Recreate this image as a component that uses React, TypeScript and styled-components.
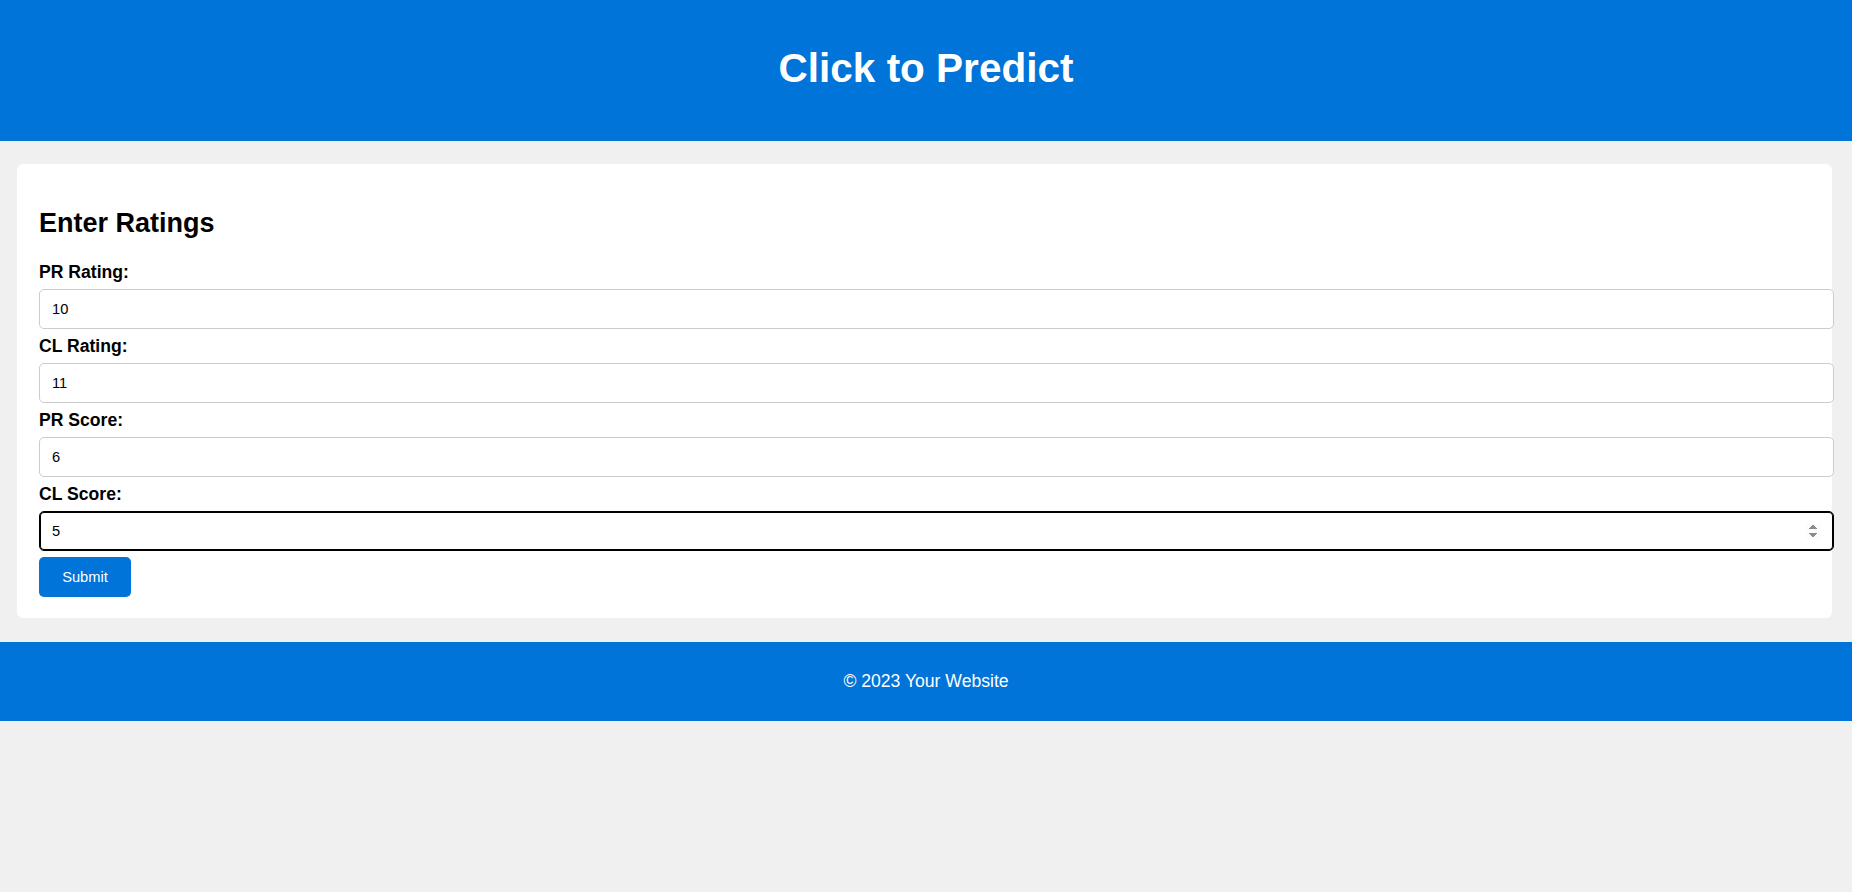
import { createGlobalStyle } from "styled-components";
import styled from "styled-components";

const GlobalStyle = createGlobalStyle`
    body {
        margin: 0;
        background-color: #f0f0f0;
        font-family: "Liberation Sans", Arial, sans-serif;
    }
`;

const Header = styled.header`
    height: 141px;
    background-color: #0074d9;
    color: #ffffff;
    display: flex;
    align-items: center;
    justify-content: center;
    padding-bottom: 4px;
    box-sizing: border-box;
`;

const Title = styled.h1`
    margin: 0;
    font-size: 40.5px;
    font-weight: bold;
`;

const Main = styled.main`
    padding: 23px 20px 24px 17px;
`;

const Card = styled.section`
    background-color: #ffffff;
    border-radius: 6px;
    padding: 22px 22px 21px;
`;

const Heading = styled.h2`
    margin: 22px 0 24px;
    font-size: 27px;
    line-height: 30px;
    font-weight: bold;
    color: #000000;
`;

const Form = styled.form`
    display: flex;
    flex-direction: column;
    align-items: flex-start;
`;

const Label = styled.label`
    display: block;
    font-size: 17.6px;
    line-height: 20px;
    font-weight: bold;
    color: #000000;
    margin: 7px 0;

    &:first-child {
        margin-top: 0;
    }
`;

const Input = styled.input<{ $active?: boolean }>`
    box-sizing: border-box;
    width: calc(100% + 24px);
    height: 40px;
    padding: 0 12px;
    border: 1px solid ${props => (props.$active ? "#000000" : "#cccccc")};
    box-shadow: ${props => (props.$active ? "inset 0 0 0 1px #000000" : "none")};
    border-radius: 5px;
    font-family: "Liberation Sans", Arial, sans-serif;
    font-size: 14.67px;
    color: #000000;
    background: #ffffff;
    outline: none;
`;

const SubmitButton = styled.button`
    margin-top: 6px;
    width: 92px;
    height: 40px;
    border: none;
    border-radius: 5px;
    background-color: #0074d9;
    color: #ffffff;
    font-family: "Liberation Sans", Arial, sans-serif;
    font-size: 14.67px;
    cursor: pointer;
`;

const Footer = styled.footer`
    height: 79px;
    background-color: #0074d9;
    color: #ffffff;
    display: flex;
    align-items: center;
    justify-content: center;
    font-size: 17.6px;
`;

const fields = [
    { id: "pr_rating", label: "PR Rating:", value: "10" },
    { id: "cl_rating", label: "CL Rating:", value: "11" },
    { id: "pr_score", label: "PR Score:", value: "6" },
    { id: "cl_score", label: "CL Score:", value: "5" },
];

const App = () => {
    return <>
        <GlobalStyle />
        <Header>
            <Title>Click to Predict</Title>
        </Header>
        <Main>
            <Card>
                <Heading>Enter Ratings</Heading>
                <Form onSubmit={e => e.preventDefault()}>
                    {fields.map((f, index) => {
                        const last = index === fields.length - 1;
                        return <>
                            <Label key={f.id + "-l"} htmlFor={f.id}>{f.label}</Label>
                            <Input
                                key={f.id}
                                id={f.id}
                                type="number"
                                defaultValue={f.value}
                                $active={last}
                                autoFocus={last}
                            />
                        </>
                    })}
                    <SubmitButton type="submit">Submit</SubmitButton>
                </Form>
            </Card>
        </Main>
        <Footer>© 2023 Your Website</Footer>
    </>
}

export default App;
